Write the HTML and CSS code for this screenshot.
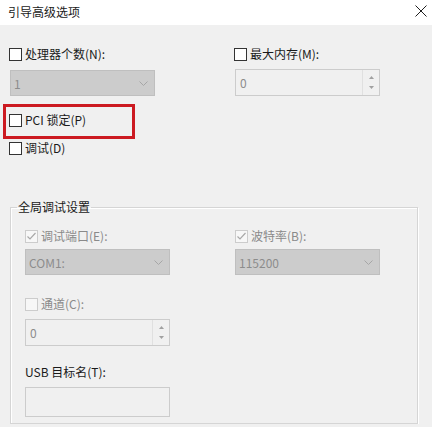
FILE: index.html
```html
<!DOCTYPE html>
<html lang="zh-CN">

<head>
  <meta charset="UTF-8">
  <meta name="viewport" content="width=device-width, initial-scale=1.0">
  <title>引导高级选项</title>
  <link rel="stylesheet" href="styles.css">
</head>

<body>
  <div class="titlebar">
    <span class="title">引导高级选项</span>
    <svg class="close" width="12" height="12" viewBox="0 0 12 12">
      <path d="M0.5 0.5 L11.5 11.5 M11.5 0.5 L0.5 11.5" stroke="#1e1e1e" stroke-width="1" fill="none" />
    </svg>
  </div>

  <div class="content">
    <div class="pair top-pair">
      <div class="field">
        <label class="check"><span class="box"></span>处理器个数(N):</label>
        <div class="combo">
          <span>1</span>
          <svg class="chevron" width="9" height="5" viewBox="0 0 9 5"><path d="M0.5 0.5 L4.5 4.5 L8.5 0.5" stroke="#a6a6a6" fill="none" /></svg>
        </div>
      </div>
      <div class="field">
        <label class="check"><span class="box"></span>最大内存(M):</label>
        <div class="spin">
          <span>0</span>
          <div class="spin-btns">
            <svg width="5" height="3" viewBox="0 0 5 3"><path d="M2.5 0 L5 3 L0 3 Z" fill="#a0a0a0" /></svg>
            <svg width="5" height="3" viewBox="0 0 5 3"><path d="M0 0 L5 0 L2.5 3 Z" fill="#a0a0a0" /></svg>
          </div>
        </div>
      </div>
    </div>

    <div class="highlight">
      <label class="check"><span class="box"></span>PCI 锁定(P)</label>
    </div>
    <label class="check debug-row"><span class="box"></span>调试(D)</label>

    <fieldset class="group">
      <legend>全局调试设置</legend>

      <div class="pair group-pair">
        <div class="field">
          <label class="check off"><span class="box checked"><svg width="11" height="11" viewBox="0 0 11 11"><path d="M1.5 5.5 L4 8 L9.5 2" stroke="#a8a8a8" stroke-width="1.2" fill="none" /></svg></span>调试端口(E):</label>
          <div class="combo">
            <span>COM1:</span>
            <svg class="chevron" width="9" height="5" viewBox="0 0 9 5"><path d="M0.5 0.5 L4.5 4.5 L8.5 0.5" stroke="#a6a6a6" fill="none" /></svg>
          </div>
        </div>
        <div class="field">
          <label class="check off"><span class="box checked"><svg width="11" height="11" viewBox="0 0 11 11"><path d="M1.5 5.5 L4 8 L9.5 2" stroke="#a8a8a8" stroke-width="1.2" fill="none" /></svg></span>波特率(B):</label>
          <div class="combo">
            <span>115200</span>
            <svg class="chevron" width="9" height="5" viewBox="0 0 9 5"><path d="M0.5 0.5 L4.5 4.5 L8.5 0.5" stroke="#a6a6a6" fill="none" /></svg>
          </div>
        </div>
      </div>

      <div class="field channel">
        <label class="check off"><span class="box"></span>通道(C):</label>
        <div class="spin">
          <span>0</span>
          <div class="spin-btns">
            <svg width="5" height="3" viewBox="0 0 5 3"><path d="M2.5 0 L5 3 L0 3 Z" fill="#a0a0a0" /></svg>
            <svg width="5" height="3" viewBox="0 0 5 3"><path d="M0 0 L5 0 L2.5 3 Z" fill="#a0a0a0" /></svg>
          </div>
        </div>
      </div>

      <div class="field usb">
        <label class="plain">USB 目标名(T):</label>
        <div class="textbox"></div>
      </div>
    </fieldset>
  </div>
</body>

</html>
```

FILE: styles.css
```css
body {
  margin: 0;
  background: #f0f0f0;
  font-family: "Microsoft YaHei UI", "Noto Sans CJK SC", sans-serif;
  font-size: 12px;
  color: #1a1a1a;
  overflow: hidden;
}

.titlebar {
  height: 25px;
  background: #ffffff;
  display: flex;
  justify-content: space-between;
  align-items: center;
  padding: 0 5px 0 8px;
}

.title {
  line-height: 14px;
  margin-top: -2px;
}

.close {
  margin-top: -3px;
}

.content {
  padding: 22px 0 0 9px;
}

.pair {
  display: grid;
}

.top-pair {
  grid-template-columns: 225px 1fr;
}

.group-pair {
  grid-template-columns: 210px 1fr;
}

.field {
  display: flex;
  flex-direction: column;
  align-items: flex-start;
}

.check {
  display: flex;
  align-items: center;
  gap: 3px;
  height: 14px;
  line-height: 14px;
  white-space: nowrap;
}

.box {
  width: 11px;
  height: 11px;
  border: 1px solid #333333;
  background: #ffffff;
  display: flex;
  align-items: center;
  justify-content: center;
}

.off {
  color: #8a8a8a;
}

.off .box {
  border-color: #cccccc;
  background: #f7f7f7;
}

.combo {
  box-sizing: border-box;
  width: 145px;
  height: 26px;
  background: #cccccc;
  border: 1px solid #bfbfbf;
  display: flex;
  align-items: center;
  justify-content: space-between;
  padding: 0 6px 0 3px;
  color: #8c8c8c;
}

.top-pair .combo {
  margin: 9px 0 0 1px;
}

.spin {
  box-sizing: border-box;
  width: 145px;
  height: 27px;
  background: #f0f0f0;
  border: 1px solid #cccccc;
  display: flex;
  align-items: stretch;
  justify-content: space-between;
  color: #8c8c8c;
}

.spin span {
  padding-left: 4px;
  line-height: 25px;
}

.spin-btns {
  width: 16px;
  border-left: 1px solid #e0e0e0;
  display: flex;
  flex-direction: column;
  justify-content: space-around;
  align-items: center;
  padding: 3px 0;
}

.top-pair .spin {
  margin: 8px 0 0 1px;
}

.highlight {
  box-sizing: border-box;
  width: 132px;
  height: 35px;
  margin: 8px 0 0 -6px;
  padding: 6px 0 0 3px;
  border: 3px solid #cc1a21;
}

.debug-row {
  margin-top: 2px;
}

.group {
  box-sizing: border-box;
  width: 408px;
  margin: 45px 0 0 1px;
  padding: 15px 14px 6px 14px;
  border: 1px solid #d5d5d5;
  box-shadow: inset 1px 1px #ffffff, 1px 1px #ffffff;
  min-inline-size: 0;
}

.group legend {
  margin-left: -8px;
  padding: 0 1px;
  line-height: 14px;
}

.group-pair .combo {
  margin-top: 6px;
}

.channel {
  margin-top: 22px;
}

.channel .spin {
  margin-top: 8px;
}

.usb {
  margin-top: 19px;
}

.plain {
  line-height: 14px;
}

.textbox {
  box-sizing: border-box;
  width: 145px;
  height: 30px;
  margin-top: 8px;
  background: #f0f0f0;
  border: 1px solid #cccccc;
}
```
